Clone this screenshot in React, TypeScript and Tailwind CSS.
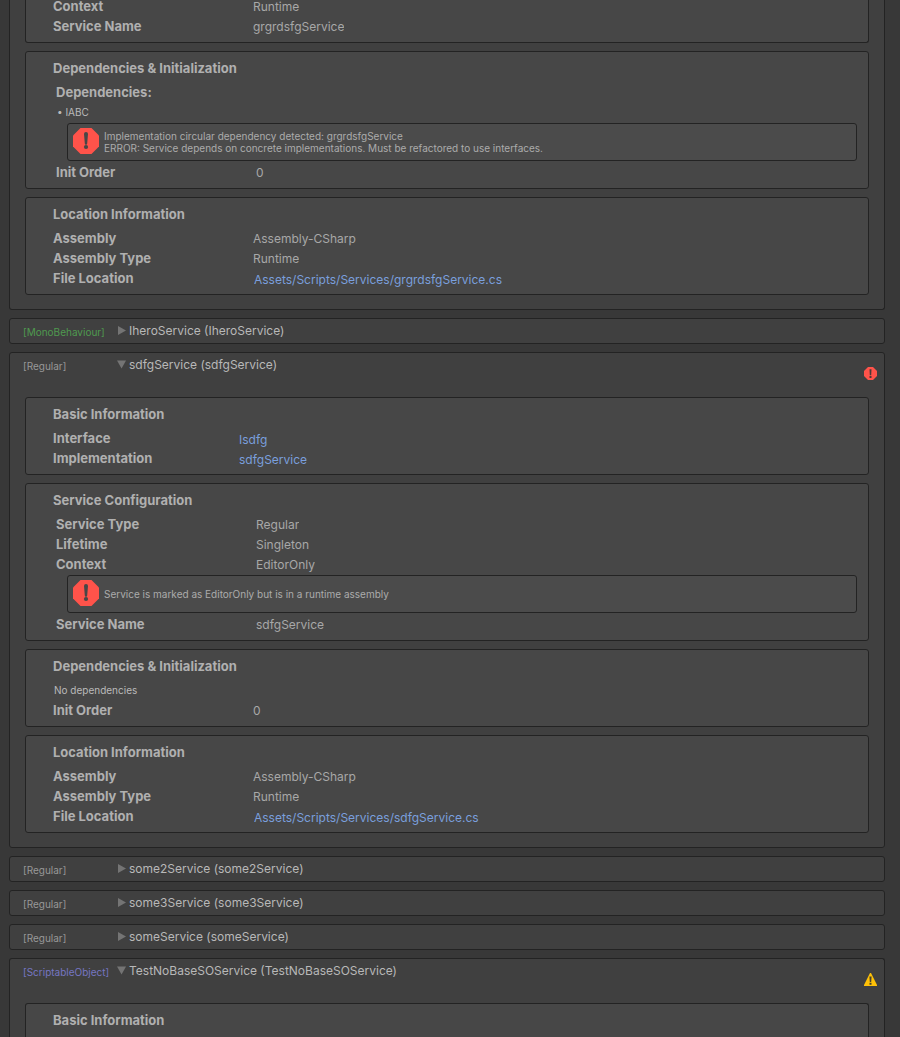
import type { ReactNode } from "react";

function ErrorIcon({ className }: { className: string }) {
  return (
    <svg viewBox="0 0 26 26" className={className} aria-hidden="true">
      <path d="M7.5 0h11L26 7.5v11L18.5 26h-11L0 18.5v-11z" fill="#ff534a" />
      <path d="M11 6a2 2 0 0 1 4 0l-.8 9.5a1.2 1.2 0 0 1-2.4 0z" fill="#474747" />
      <circle cx="13" cy="19" r="2.1" fill="#474747" />
    </svg>
  );
}

function SmallErrorIcon() {
  return (
    <svg viewBox="0 0 13 13" className="size-[13px]" role="img" aria-label="Error">
      <path d="M4 0h5l4 4v5l-4 4H4L0 9V4z" fill="#ff534a" />
      <path d="M5.5 2.2h2l-.3 6H5.8zM5.5 9h2v2h-2z" fill="#4a3a38" />
    </svg>
  );
}

function WarningIcon() {
  return (
    <svg viewBox="0 0 13 13" className="size-[13px]" role="img" aria-label="Warning">
      <path d="M6 0h1l6 12v1H0v-1z" fill="#ffc107" />
      <path d="M5.4 3.6h2.2l-.4 5.4H5.8zM5.5 9.8h2v2h-2z" fill="#44402f" />
    </svg>
  );
}

function Section({ title, children }: { title?: string; children?: ReactNode }) {
  return (
    <section className="rounded-[3px] border border-[#232323] bg-[#474747] py-1.5 pl-[27px] pr-[11px]">
      <h2 className="mb-1 text-[13px] font-bold leading-5 text-[#b0b0b0]">{title}</h2>
      {children}
    </section>
  );
}

function Row({ label, children, inset = false }: { label: string; children?: ReactNode; inset?: boolean }) {
  return (
    <div className={inset ? "flex h-5 pl-[3px]" : "flex h-5"}>
      <div className="w-[200px] shrink-0 text-[13px] font-bold leading-5 text-[#b0b0b0]">{label}</div>
      <div className="min-w-0 truncate leading-[22px] text-[#a8a8a8]">{children}</div>
    </div>
  );
}

function LinkRow({ label, text, near = false }: { label: string; text: string; near?: boolean }) {
  return (
    <div className="flex h-5">
      <div
        className={
          near
            ? "w-[186px] shrink-0 text-[13px] font-bold leading-5 text-[#b0b0b0]"
            : "w-[201px] shrink-0 text-[13px] font-bold leading-5 text-[#b0b0b0]"
        }
      >
        {label}
      </div>
      <a href="#" className="truncate leading-6 text-[#7a9fdd]">
        {text}
      </a>
    </div>
  );
}

function HelpBox({ lines }: { lines: string[] }) {
  return (
    <div
      role="alert"
      className="my-px ml-3.5 flex h-[38px] items-center gap-[5px] rounded-[3px] border border-[#232323] bg-[#4b4b4b] pl-[5px] text-[10px] leading-3 text-[#acacac]"
    >
      <ErrorIcon className="mt-1 size-[26px] shrink-0 self-start" />
      <div>
        {lines.map((line) => (
          <p key={line}>{line}</p>
        ))}
      </div>
    </div>
  );
}

const tagColors = {
  Regular: "w-[94px] shrink-0 text-left text-[10px] leading-[26px] text-[#989898]",
  MonoBehaviour: "w-[94px] shrink-0 text-left text-[10px] leading-[26px] text-[#4f9a4f]",
  ScriptableObject: "w-[94px] shrink-0 text-left text-[10px] leading-[26px] text-[#7676c2]",
};

function Header({ tag, name, open = false }: { tag: keyof typeof tagColors; name: string; open?: boolean }) {
  return (
    <div className="flex h-6 pl-[13px]">
      <span className={tagColors[tag]}>[{tag}]</span>
      <button type="button" aria-expanded={open} className="flex h-[22px] items-center gap-[3px] leading-6 text-[#b8b8b8]">
        <svg viewBox="0 0 9 9" className="size-[9px]" aria-hidden="true">
          <path d={open ? "M0 .5h9L4.5 8.5z" : "M1 0v9l8-4.5z"} fill="#747474" />
        </svg>
        <span className="pt-0.5">{name}</span>
      </button>
    </div>
  );
}

function Collapsed({ tag, name }: { tag: keyof typeof tagColors; name: string }) {
  return (
    <article className="rounded-[3px] border border-[#232323] bg-[#404040]">
      <Header tag={tag} name={name} />
    </article>
  );
}

export default function App() {
  return (
    <main className="flex h-screen flex-col gap-2 overflow-hidden bg-[#383838] pl-[9px] pr-[15px] font-['Inter',sans-serif] text-[12px]">
      <article className="shrink-0 rounded-b-[3px] border border-t-0 border-[#232323] bg-[#404040] px-[15px] pb-3.5">
        <div className="flex flex-col gap-2">
          <section className="rounded-b-[3px] border border-t-0 border-[#232323] bg-[#474747] pb-1.5 pl-[27px]">
            <div className="flex h-4">
              <div className="w-[200px] shrink-0 text-[13px] font-bold leading-3 text-[#b0b0b0]">Context</div>
              <div className="leading-[14px] text-[#a8a8a8]">Runtime</div>
            </div>
            <Row label="Service Name">grgrdsfgService</Row>
          </section>
          <Section title="Dependencies & Initialization">
            <div className="h-5 pl-[3px] text-[13px] font-bold leading-5 text-[#b0b0b0]">Dependencies:</div>
            <div className="h-5 pl-1 text-[10px] leading-5 text-[#bababa]">• IABC</div>
            <HelpBox
              lines={[
                "Implementation circular dependency detected: grgrdsfgService",
                "ERROR: Service depends on concrete implementations. Must be refactored to use interfaces.",
              ]}
            />
            <Row label="Init Order" inset>0</Row>
          </Section>
          <Section title="Location Information">
            <Row label="Assembly">Assembly-CSharp</Row>
            <Row label="Assembly Type">Runtime</Row>
            <LinkRow label="File Location" text="Assets/Scripts/Services/grgrdsfgService.cs" />
          </Section>
        </div>
      </article>

      <Collapsed tag="MonoBehaviour" name="IheroService (IheroService)" />

      <article className="shrink-0 rounded-[3px] border border-[#232323] bg-[#404040] pb-3.5">
        <div className="flex h-11 justify-between pr-[7px]">
          <Header tag="Regular" name="sdfgService (sdfgService)" open />
          <div className="pt-3.5">
            <SmallErrorIcon />
          </div>
        </div>
        <div className="flex flex-col gap-2 px-[15px]">
          <Section title="Basic Information">
            <LinkRow label="Interface" text="Isdfg" near />
            <LinkRow label="Implementation" text="sdfgService" near />
          </Section>
          <Section title="Service Configuration">
            <Row label="Service Type" inset>Regular</Row>
            <Row label="Lifetime" inset>Singleton</Row>
            <Row label="Context" inset>EditorOnly</Row>
            <HelpBox lines={["Service is marked as EditorOnly but is in a runtime assembly"]} />
            <Row label="Service Name" inset>sdfgService</Row>
          </Section>
          <Section title="Dependencies & Initialization">
            <div className="h-5 pl-px text-[10px] leading-5 text-[#bababa]">No dependencies</div>
            <Row label="Init Order">0</Row>
          </Section>
          <Section title="Location Information">
            <Row label="Assembly">Assembly-CSharp</Row>
            <Row label="Assembly Type">Runtime</Row>
            <LinkRow label="File Location" text="Assets/Scripts/Services/sdfgService.cs" />
          </Section>
        </div>
      </article>

      <Collapsed tag="Regular" name="some2Service (some2Service)" />
      <Collapsed tag="Regular" name="some3Service (some3Service)" />
      <Collapsed tag="Regular" name="someService (someService)" />

      <article className="flex flex-1 flex-col rounded-t-[3px] border border-b-0 border-[#232323] bg-[#404040]">
        <div className="flex h-11 shrink-0 justify-between pr-[7px]">
          <Header tag="ScriptableObject" name="TestNoBaseSOService (TestNoBaseSOService)" open />
          <div className="pt-3.5">
            <WarningIcon />
          </div>
        </div>
        <section className="mx-[15px] flex-1 rounded-t-[3px] border border-b-0 border-[#232323] bg-[#474747] pl-[27px] pt-1.5">
          <h2 className="text-[13px] font-bold leading-5 text-[#b0b0b0]">Basic Information</h2>
        </section>
      </article>
    </main>
  );
}
